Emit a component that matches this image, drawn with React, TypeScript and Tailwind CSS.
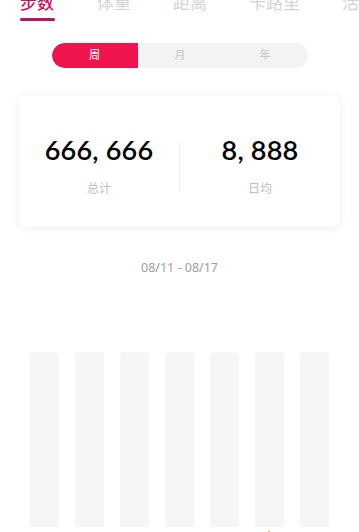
import React from "react";

const tabs = [
  { label: "步数", active: true },
  { label: "体重" },
  { label: "距离" },
  { label: "卡路里" },
  { label: "活动" },
];

const days = ["一", "二", "三", "四", "五", "六", "日"];

export default function App() {
  return (
    <div
      className="relative w-[359px] h-[532px] overflow-hidden bg-white"
      style={{ fontFamily: '"Noto Sans", "Noto Sans CJK SC", sans-serif' }}
    >
      {/* top tabs */}
      <div className="flex -mt-[6px] pl-[20px] gap-[42px] whitespace-nowrap">
        {tabs.map((t) => (
          <div key={t.label} className="flex flex-col items-start">
            <span
              className={
                "text-[17px] leading-[17px] " +
                (t.active ? "text-[#c2185b] font-medium" : "text-[#d4d4d4]")
              }
            >
              {t.label}
            </span>
            {t.active ? (
              <div className="mt-[7px] h-[3px] w-[35px] rounded-full bg-[#b3195a]" />
            ) : null}
          </div>
        ))}
      </div>

      {/* segmented */}
      <div className="mt-[22px] mx-auto flex h-[25px] w-[256px] rounded-full bg-[#f3f3f3] overflow-hidden text-[11px]">
        <div className="flex w-[86px] items-center justify-center rounded-l-full bg-[#f0144e] text-white">
          周
        </div>
        <div className="flex flex-1 items-center justify-center text-[#c4c4c4]">月</div>
        <div className="flex flex-1 items-center justify-center text-[#c4c4c4]">年</div>
      </div>

      {/* card */}
      <div className="mx-[19px] mt-[28px] h-[131px] rounded-[6px] bg-white shadow-[0_1px_8px_rgba(0,0,0,0.08)] flex items-center">
        <div className="flex flex-1 flex-col items-center pt-[8px]">
          <span
            className="text-[27px] leading-[30px] font-semibold text-black tracking-[0.2px]"
            style={{ fontFamily: "Lato, sans-serif" }}
          >
            666, 666
          </span>
          <span className="mt-[16px] text-[12px] leading-[16px] text-[#bdbdbd]">总计</span>
        </div>
        <div className="h-[48px] w-px bg-[#ececec] mt-[10px]" />
        <div className="flex flex-1 flex-col items-center pt-[8px]">
          <span
            className="text-[27px] leading-[30px] font-semibold text-black tracking-[0.2px]"
            style={{ fontFamily: "Lato, sans-serif" }}
          >
            8, 888
          </span>
          <span className="mt-[16px] text-[12px] leading-[16px] text-[#bdbdbd]">日均</span>
        </div>
      </div>

      {/* date range */}
      <div className="mt-[32px] text-center text-[12.5px] text-[#9e9e9e]">08/11 - 08/17</div>

      {/* bars */}
      <div className="mt-[74px] flex pl-[30px] gap-[16px]">
        {days.map((d, i) => (
          <div key={d} className="flex flex-col items-center w-[29px]">
            <div className="h-[175px] w-[29px] rounded-t-[4px] bg-[#f6f6f6]" />
            <span
              className={
                "mt-[4px] text-[11px] leading-[12px] " +
                (i === 3 ? "text-[#f0144e]" : "text-[#555]")
              }
            >
              {d}
            </span>
          </div>
        ))}
      </div>
    </div>
  );
}
